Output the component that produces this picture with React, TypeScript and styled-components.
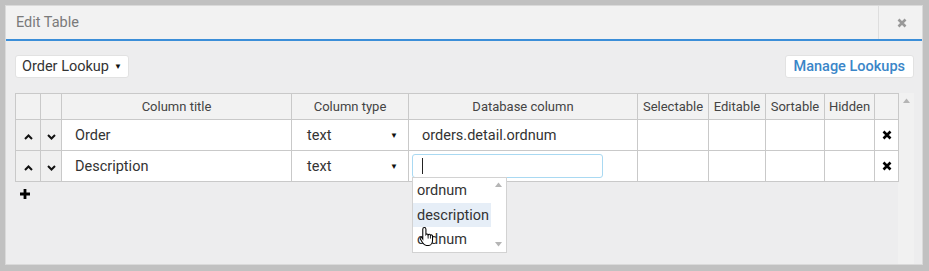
import React from 'react';
import styled, { createGlobalStyle } from 'styled-components';

const GlobalStyle = createGlobalStyle`
  html, body {
    margin: 0;
    padding: 0;
    background: #c1c1c1;
    font-family: Roboto, 'Liberation Sans', Arial, sans-serif;
  }
`;

const Frame = styled.div`
  padding: 5px;
`;

const Dialog = styled.div`
  width: 918px;
  height: 260px;
  box-sizing: border-box;
  border: 1px solid #dadada;
  background: #ededee;
  display: flex;
  flex-direction: column;
`;

const Header = styled.div`
  display: flex;
  height: 33px;
  background: #f2f2f2;
  border-bottom: 2px solid #3b8ed8;
`;

const Title = styled.div`
  flex: 1;
  display: flex;
  align-items: center;
  padding-left: 10px;
  font-size: 14.5px;
  color: #7a7a7a;
`;

const CloseBox = styled.div`
  width: 41px;
  border-left: 1px solid #dedede;
  display: flex;
  align-items: center;
  justify-content: center;
  padding-left: 2px;
`;

const Body = styled.div`
  flex: 1;
  padding: 14px 8px 0 9px;
  display: flex;
  flex-direction: column;
`;

const Toolbar = styled.div`
  display: flex;
  justify-content: space-between;
  align-items: center;
`;

const Button = styled.div<{ $accent?: boolean }>`
  height: 23px;
  box-sizing: border-box;
  display: flex;
  align-items: center;
  gap: 5px;
  padding: 0 ${p => (p.$accent ? '8px' : '6px')};
  background: #fff;
  border: 1px solid #e2e2e2;
  border-radius: 3px;
  font-size: 14.5px;
  color: ${p => (p.$accent ? '#3a86c8' : '#333')};
  font-weight: ${p => (p.$accent ? 500 : 400)};
`;

const Caret = styled.span`
  font-size: 8px;
  color: #111;
`;

const TableArea = styled.div`
  margin-top: 15px;
  display: flex;
  align-items: stretch;
  flex: 1;
`;

const TableWrap = styled.div`
  position: relative;
  width: 883px;
`;

const Gutter = styled.div`
  width: 16px;
  background: #f1f1f1;
  display: flex;
  justify-content: center;
  padding-top: 5px;
  box-sizing: border-box;
`;

const Table = styled.table`
  border-collapse: collapse;
  table-layout: fixed;
  width: 883px;
  background: #fff;
`;

const HeadCell = styled.th`
  height: 25px;
  padding: 0;
  border: 1px solid #c9c9c9;
  background: #f2f2f2;
  font-size: 13px;
  font-weight: 400;
  color: #444;
  text-align: center;
  white-space: nowrap;
  overflow: hidden;
`;

const Cell = styled.td<{ $grey?: boolean; $center?: boolean }>`
  height: 30px;
  padding: 0 0 0 ${p => (p.$center ? '0' : '13px')};
  border: 1px solid #c9c9c9;
  background: ${p => (p.$grey ? '#f0f0f0' : '#fff')};
  font-size: 14.5px;
  color: #333;
  text-align: ${p => (p.$center ? 'center' : 'left')};
  vertical-align: middle;
  white-space: nowrap;
`;

const SelectCell = styled.div`
  display: flex;
  justify-content: space-between;
  align-items: center;
  padding-right: 10px;
  padding-left: 2px;
`;

const InputBox = styled.div`
  margin-left: -10px;
  width: 191px;
  height: 24px;
  box-sizing: border-box;
  border: 1px solid #a9d9f2;
  border-radius: 3px;
  display: flex;
  align-items: center;
  padding-left: 9px;
`;

const TextCaret = styled.span`
  width: 1px;
  height: 16px;
  background: #222;
`;

const Dropdown = styled.div`
  position: absolute;
  left: 397px;
  top: 84px;
  width: 95px;
  height: 76px;
  box-sizing: border-box;
  border: 1px solid #d2d2d2;
  background: #fff;
  display: flex;
  z-index: 2;
`;

const OptionList = styled.div`
  flex: 1;
  display: flex;
  flex-direction: column;
`;

const Option = styled.div<{ $active?: boolean }>`
  height: 25px;
  display: flex;
  align-items: center;
  padding-left: 4px;
  font-size: 14.5px;
  color: #333;
  background: ${p => (p.$active ? '#e6eef7' : '#fff')};
`;

const DropScroll = styled.div`
  width: 15px;
  display: flex;
  flex-direction: column;
  justify-content: space-between;
  align-items: center;
  padding: 4px 0 5px;
`;

const Pointer = styled.svg`
  position: absolute;
  left: 404px;
  top: 133px;
  z-index: 3;
`;

const AddRow = styled.div`
  padding: 6px 0 0 4px;
  display: flex;
`;

const Chevron = ({ up }: { up?: boolean }) => (
  <svg width="9" height="6" viewBox="0 0 9 6">
    <polyline
      points={up ? '1,5 4.5,1.5 8,5' : '1,1 4.5,4.5 8,1'}
      fill="none"
      stroke="#111"
      strokeWidth="2"
    />
  </svg>
);

const Cross = ({ size, color }: { size: number; color: string }) => (
  <svg width={size} height={size} viewBox="0 0 10 10">
    <path d="M1.5 1.5 L8.5 8.5 M8.5 1.5 L1.5 8.5" stroke={color} strokeWidth="2.6" />
  </svg>
);

const Plus = () => (
  <svg width="12" height="12" viewBox="0 0 12 12">
    <path d="M6 1 L6 11 M1 6 L11 6" stroke="#000" strokeWidth="2.8" />
  </svg>
);

const Tri = ({ up }: { up?: boolean }) => (
  <svg width="7" height="5" viewBox="0 0 7 5">
    <polygon points={up ? '0,5 3.5,0.5 7,5' : '0,0 3.5,4.5 7,0'} fill="#b5b5b5" />
  </svg>
);

const widths = [25, 21, 230, 117, 229, 71, 57, 59, 50, 24];
const heads = ['', '', 'Column title', 'Column type', 'Database column', 'Selectable', 'Editable', 'Sortable', 'Hidden', ''];

const rows = [
  { title: 'Order', type: 'text', column: 'orders.detail.ordnum', editing: false },
  { title: 'Description', type: 'text', column: '', editing: true },
];

export default function App() {
  return (
    <>
      <GlobalStyle />
      <Frame>
        <Dialog>
          <Header>
            <Title>Edit Table</Title>
            <CloseBox>
              <Cross size={10} color="#999" />
            </CloseBox>
          </Header>
          <Body>
            <Toolbar>
              <Button>
                Order Lookup <Caret>▼</Caret>
              </Button>
              <Button $accent>Manage Lookups</Button>
            </Toolbar>
            <TableArea>
              <TableWrap>
                <Table>
                  <colgroup>
                    {widths.map((w, i) => (
                      <col key={i} style={{ width: w }} />
                    ))}
                  </colgroup>
                  <thead>
                    <tr>
                      {heads.map((h, i) => (
                        <HeadCell key={i}>{h}</HeadCell>
                      ))}
                    </tr>
                  </thead>
                  <tbody>
                    {rows.map(r => (
                      <tr key={r.title}>
                        <Cell $grey $center>
                          <Chevron up />
                        </Cell>
                        <Cell $grey $center>
                          <Chevron />
                        </Cell>
                        <Cell>{r.title}</Cell>
                        <Cell>
                          <SelectCell>
                            {r.type}
                            <Caret>▼</Caret>
                          </SelectCell>
                        </Cell>
                        <Cell>
                          {r.editing ? (
                            <InputBox>
                              <TextCaret />
                            </InputBox>
                          ) : (
                            r.column
                          )}
                        </Cell>
                        <Cell />
                        <Cell />
                        <Cell />
                        <Cell />
                        <Cell $center>
                          <Cross size={10} color="#000" />
                        </Cell>
                      </tr>
                    ))}
                  </tbody>
                </Table>
                <AddRow>
                  <Plus />
                </AddRow>
                <Dropdown>
                  <OptionList>
                    <Option>ordnum</Option>
                    <Option $active>description</Option>
                    <Option>ordnum</Option>
                  </OptionList>
                  <DropScroll>
                    <Tri up />
                    <Tri />
                  </DropScroll>
                </Dropdown>
                <Pointer width="17" height="21" viewBox="0 0 16 20">
                  <path
                    d="M5 1.5 C5.9 1.5 6.5 2.1 6.5 3 L6.5 8 C6.9 7.4 8.4 7.4 8.6 8.4 C9 7.6 10.6 7.7 10.8 8.8 C11.3 8.2 12.8 8.4 12.8 9.6 L12.8 13.5 C12.8 16 11.4 18.5 9 18.5 L7 18.5 C5.2 18.5 4.2 17.4 3.2 15.8 L1.2 12.4 C0.7 11.5 1.9 10.5 2.8 11.4 L3.5 12.4 L3.5 3 C3.5 2.1 4.1 1.5 5 1.5 Z"
                    fill="#fff"
                    stroke="#000"
                    strokeWidth="1"
                  />
                  <path d="M8.6 8.4 L8.6 12 M10.8 8.8 L10.8 12" stroke="#000" strokeWidth="0.8" />
                </Pointer>
              </TableWrap>
              <Gutter>
                <Tri up />
              </Gutter>
            </TableArea>
          </Body>
        </Dialog>
      </Frame>
    </>
  );
}
